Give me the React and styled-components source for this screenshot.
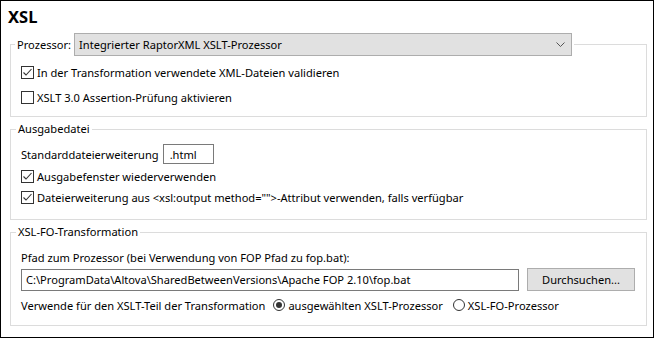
import React from 'react'
import styled, { createGlobalStyle } from 'styled-components'

const GlobalStyle = createGlobalStyle`
  html, body {
    margin: 0;
    padding: 0;
    background: #fff;
  }
  body {
    font-family: "Noto Sans", "Open Sans", sans-serif;
    font-size: 11.1px;
    color: #000;
  }
`

const Dialog = styled.div`
  box-sizing: border-box;
  width: 654px;
  height: 338px;
  border: 1px solid #000;
  padding: 3px 6px 0 9px;
  display: flex;
  flex-direction: column;
`

const Title = styled.h1`
  margin: 0 0 0 -2px;
  height: 29px;
  line-height: 26px;
  font-size: 16.5px;
  font-weight: 700;
`

const Group = styled.fieldset`
  margin: ${(p) => (p.$first ? '0' : '4px')} 0 0 0;
  padding: ${(p) => p.$pad};
  border: 1px solid #dcdcdc;
  min-width: 0;
  display: flex;
  flex-direction: column;
`

const Legend = styled.legend`
  margin-left: ${(p) => p.$offset || -5}px;
  padding: 0 2px;
  line-height: 16px;
  display: flex;
  align-items: center;
  gap: 3px;
`

const Row = styled.div`
  display: flex;
  align-items: center;
  height: ${(p) => p.$h || 20}px;
  margin-top: ${(p) => p.$mt || 0}px;
  gap: ${(p) => p.$gap || 0}px;
  white-space: nowrap;
`

const Combo = styled.div`
  box-sizing: border-box;
  width: 498px;
  height: 23px;
  background: #e1e1e1;
  border: 1px solid #adadad;
  display: flex;
  align-items: center;
  justify-content: space-between;
  padding: 0 6px 0 4px;
`

const Box = styled.span`
  box-sizing: border-box;
  width: 13px;
  height: 13px;
  border: 1px solid #333;
  background: #fff;
  display: inline-flex;
  align-items: center;
  justify-content: center;
  margin-right: 3px;
  flex: none;
`

const Radio = styled.span`
  box-sizing: border-box;
  width: 12px;
  height: 12px;
  border: 1px solid #333;
  border-radius: 50%;
  display: inline-flex;
  align-items: center;
  justify-content: center;
  margin: 0 3px 0 ${(p) => p.$ml || 0}px;
  flex: none;

  &::after {
    content: '';
    width: 6px;
    height: 6px;
    border-radius: 50%;
    background: ${(p) => (p.$on ? '#333' : 'transparent')};
  }
`

const Field = styled.div`
  box-sizing: border-box;
  width: ${(p) => p.$w}px;
  height: ${(p) => p.$h}px;
  border: 1px solid #7a7a7a;
  background: #fff;
  padding: 0 ${(p) => p.$pl}px;
  display: flex;
  align-items: center;
  flex: none;
`

const Button = styled.button`
  box-sizing: border-box;
  width: 110px;
  height: 23px;
  background: #e1e1e1;
  border: 1px solid #adadad;
  font: inherit;
  color: #000;
  padding: 0;
`

const Check = ({ checked, children }) => (
  <Row>
    <Box>
      {checked && (
        <svg width="11" height="11" viewBox="0 0 11 11">
          <polyline points="1.5,5.5 4,8 9.5,2" fill="none" stroke="#333" strokeWidth="1.1" />
        </svg>
      )}
    </Box>
    {children}
  </Row>
)

const App = () => (
  <>
    <GlobalStyle />
    <Dialog>
      <Title>XSL</Title>

      <Group $first $pad="0 10px 9px 10px">
        <Legend $offset={-6}>
          <span>Prozessor:</span>
          <Combo>
            <span>Integrierter RaptorXML XSLT-Prozessor</span>
            <svg width="9" height="6" viewBox="0 0 9 6">
              <polyline points="0.5,0.5 4.5,4.5 8.5,0.5" fill="none" stroke="#555" strokeWidth="1" />
            </svg>
          </Combo>
        </Legend>
        <Row $mt={6} as="div">
          <Check checked>In der Transformation verwendete XML-Dateien validieren</Check>
        </Row>
        <Row $mt={5} as="div">
          <Check>XSLT 3.0 Assertion-Prüfung aktivieren</Check>
        </Row>
      </Group>

      <Group $pad="0 10px 12px 10px">
        <Legend>Ausgabedatei</Legend>
        <Row $h={22} $mt={6} $gap={4}>
          <span>Standarddateierweiterung</span>
          <Field $w={51} $h={20} $pl={6}>.html</Field>
        </Row>
        <Row $mt={1}>
          <Check checked>Ausgabefenster wiederverwenden</Check>
        </Row>
        <Row $mt={1}>
          <Check checked>Dateierweiterung aus &lt;xsl:output method=""&gt;-Attribut verwenden, falls verfügbar</Check>
        </Row>
      </Group>

      <Group $pad="0 11px 10px 10px">
        <Legend>XSL-FO-Transformation</Legend>
        <Row $h={16} $mt={9}>Pfad zum Prozessor (bei Verwendung von FOP Pfad zu fop.bat):</Row>
        <Row $h={23} $mt={3} $gap={8}>
          <Field $w={498} $h={22} $pl={4}>C:\ProgramData\Altova\SharedBetweenVersions\Apache FOP 2.10\fop.bat</Field>
          <Button>Durchsuchen...</Button>
        </Row>
        <Row $mt={4}>
          <span>Verwende für den XSLT-Teil der Transformation</span>
          <Radio $on $ml={8} />
          <span>ausgewählten XSLT-Prozessor</span>
          <Radio $ml={10} />
          <span>XSL-FO-Prozessor</span>
        </Row>
      </Group>
    </Dialog>
  </>
)

export default App
